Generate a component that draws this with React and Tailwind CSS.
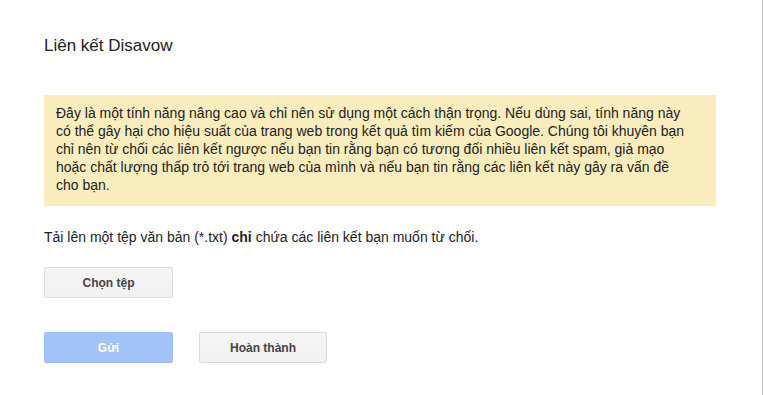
export default function App() {
  return (
    <div className="flex h-[395px] w-[763px] bg-white font-['Liberation_Sans',Arial,sans-serif] text-[#222]">
      <div className="flex-1 pl-[44px] pr-[46px] pt-[35px]">
        <h1 className="text-[17px] leading-[22px] font-normal">Liên kết Disavow</h1>

        <div className="mt-[38px] bg-[#f9edbe] px-[12px] pt-[9px] pb-[12px] text-[14px] leading-[18px] whitespace-nowrap">
          Đây là một tính năng nâng cao và chỉ nên sử dụng một cách thận trọng. Nếu dùng sai, tính năng này
          <br />
          có thể gây hại cho hiệu suất của trang web trong kết quả tìm kiếm của Google. Chúng tôi khuyên bạn
          <br />
          chỉ nên từ chối các liên kết ngược nếu bạn tin rằng bạn có tương đối nhiều liên kết spam, giả mạo
          <br />
          hoặc chất lượng thấp trỏ tới trang web của mình và nếu bạn tin rằng các liên kết này gây ra vấn đề
          <br />
          cho bạn.
        </div>

        <p className="mt-[22px] text-[14px] leading-[18px]">
          Tải lên một tệp văn bản (*.txt) <b>chỉ</b> chứa các liên kết bạn muốn từ chối.
        </p>

        <button className="mt-[21px] h-[31px] w-[129px] rounded-[2px] border border-[#dcdcdc] bg-gradient-to-b from-[#f5f5f5] to-[#f1f1f1] text-[12px] font-bold text-[#444]">
          Chọn tệp
        </button>

        <div className="mt-[34px] flex gap-[26px]">
          <button className="h-[31px] w-[129px] rounded-[2px] border border-[#9dbff8] bg-[#a3c3f8] text-[12px] font-bold text-white">
            Gửi
          </button>
          <button className="h-[31px] w-[128px] rounded-[2px] border border-[#dcdcdc] bg-gradient-to-b from-[#f5f5f5] to-[#f1f1f1] text-[12px] font-bold text-[#444]">
            Hoàn thành
          </button>
        </div>
      </div>
      <div className="w-px bg-[#c8c8c8]" />
    </div>
  );
}
